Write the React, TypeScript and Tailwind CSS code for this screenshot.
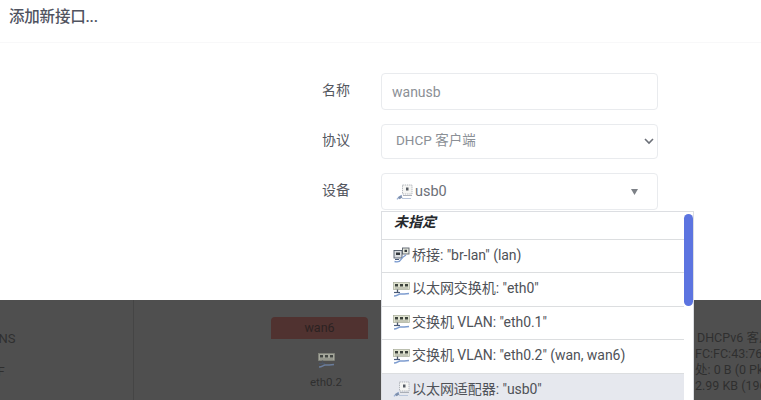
import React from "react";

function Eth({ dim = false }: { dim?: boolean }) {
  return (
    <svg viewBox="0 0 17 16" width="17" height="16" className={dim ? "opacity-60" : ""}>
      <rect x="0.5" y="1.5" width="16" height="7" fill="#dfe2cf" stroke="#a6aa98" strokeWidth="0.7" />
      <path d="M2 3h3v2.500H2zM7 3h3v2.500H7zM12 3h3v2.500h-3z" fill="#3c423c" />
      <path d="M2 7h13" stroke="#8f9486" strokeWidth="0.7" />
      <path d="M4.500 8.500v3" stroke="#4c5666" strokeWidth="1.300" />
      <path d="M1 11.500h6" stroke="#4a5a78" strokeWidth="1.200" />
      <path d="M1 15c3 0 4-1.600 6-2s4 .3 9-.4" fill="none" stroke="#7d9ccf" strokeWidth="1.500" />
    </svg>
  );
}

function Bridge() {
  return (
    <svg viewBox="0 0 17 16" width="17" height="16">
      <rect x="1" y="3.500" width="8" height="7.500" fill="#dcdfe2" stroke="#4f5a68" strokeWidth="0.900" />
      <rect x="9.500" y="1" width="6.500" height="6" fill="#e6e8de" stroke="#59606b" strokeWidth="0.900" />
      <path d="M3 5.500h4v2.500H3zM11.500 2.800h2.500v2.200h-2.500z" fill="#33383c" />
      <path d="M1.500 14.500c3.500 1 5.500 0 6.500-2s2.500-3 5-4.500" fill="none" stroke="#7d9ccf" strokeWidth="1.400" />
      <path d="M2 12.500h4" stroke="#4a5a78" strokeWidth="1" />
    </svg>
  );
}

function Usb() {
  return (
    <svg viewBox="0 0 17 16" width="17" height="16">
      <rect x="6.500" y="1" width="9.500" height="9" fill="#f6f6f4" stroke="#a2a7ae" strokeWidth="0.800" strokeDasharray="1.400 0.800" />
      <path d="M10 3.500h2.500v3H10z" fill="#555a62" />
      <path d="M7 11.500h9" stroke="#9aa0a8" strokeWidth="0.800" />
      <path d="M1 15.300c2-3 3-3.300 5-3.800" fill="none" stroke="#9db3d6" strokeWidth="1.300" />
      <path d="M2 13.300l3-1.800 1.500 2-3 1.800z" fill="#7e8fab" />
      <path d="M6 14.500h9" stroke="#b9c6dc" strokeWidth="1" />
    </svg>
  );
}

function Row({ icon, children, selected }: { icon: React.ReactNode; children: React.ReactNode; selected?: boolean }) {
  return (
    <div className={`flex h-[33.5px] items-center gap-[2px] border-b border-[#dcdee0] pb-[1px] pl-[11px] text-[14px] tracking-[-0.05px] text-[#4f5258] ${selected ? "bg-[#e6e8ee]" : "bg-white"}`}>
      {icon}
      <span className="whitespace-nowrap">{children}</span>
    </div>
  );
}

export default function App() {
  return (
    <div className="relative h-[400px] w-[761px] overflow-hidden bg-white font-['Roboto','Noto_Sans_CJK_SC',sans-serif]">
      <div className="h-[300px] bg-white">
        <div className="flex h-[43px] items-start border-b border-[#f8f8f9] pl-[9px] pt-[6px] text-[15.5px] leading-[22px] font-medium tracking-[-0.2px] text-[#50535f]">
          添加新接口...
        </div>
        <div className="ml-[322px] mt-[30px] flex w-[336px] flex-col">
          <div className="flex h-[37px] items-center">
            <span className="w-[59px] pb-[3px] text-[14px] text-[#55585f]">名称</span>
            <div className="flex h-[37px] flex-1 items-center rounded-[4px] border border-[#e9ebee] pl-[10px] pt-[2px] text-[14px] text-[#8b9096]">wanusb</div>
          </div>
          <div className="mt-[14px] flex h-[35px] items-center">
            <span className="w-[59px] pb-[2px] text-[14px] text-[#55585f]">协议</span>
            <div className="flex h-[35px] flex-1 items-center justify-between rounded-[4px] border border-[#e9ebee] pb-[2px] pl-[14px] pr-[2px] text-[13.5px] text-[#8b9096]">
              <span>DHCP 客户端</span>
              <svg width="12" height="12" viewBox="0 0 12 12"><path d="M2 4l4 4 4-4" fill="none" stroke="#6c7078" strokeWidth="1.600" /></svg>
            </div>
          </div>
          <div className="mt-[14px] flex h-[37px] items-center">
            <span className="w-[59px] pb-[3px] text-[14px] text-[#55585f]">设备</span>
            <div className="flex h-[37px] flex-1 items-center justify-between rounded-[4px] border border-[#e9ebee] pl-[14px] pr-[19px] text-[14.5px] text-[#6d7178]">
              <span className="flex items-center gap-[2px]"><Usb />usb0</span>
              <svg width="7" height="6" viewBox="0 0 7 6"><path d="M0 0h7L3.500 6z" fill="#7d8187" /></svg>
            </div>
          </div>
        </div>
      </div>

      <div className="flex h-[100px] bg-[#4f4f4f] text-[12px] text-[#2f2f2f]">
        <div className="w-[134px] shrink-0 overflow-hidden border-r border-[#454545] text-[13px]">
          <div className="-ml-[10px] mt-[29px] whitespace-nowrap">DNS</div>
          <div className="-ml-[6px] mt-[13px] whitespace-nowrap">IF</div>
        </div>
        <div className="w-[247px] shrink-0 pl-[137px] pt-[17px]">
          <div className="flex h-[22px] w-[97px] items-center justify-center rounded-t-[4px] bg-[#503230] text-[12.5px] text-[#2c2222]">wan6</div>
          <div className="mt-[13px] flex flex-col items-center">
            <Eth dim />
            <div className="mt-[6px] text-[11.5px] text-[#2f2f2f]">eth0.2</div>
          </div>
        </div>
        <div className="ml-[314px] w-[66px] shrink-0 overflow-hidden whitespace-nowrap pt-[30px] text-[12.5px] leading-[16px]">
          <div className="ml-[2px]">DHCPv6 客户端</div>
          <div>FC:FC:43:76:32</div>
          <div>处: 0 B (0 Pkts.)</div>
          <div>2.99 KB (196 Pkts.)</div>
        </div>
      </div>

      <div className="absolute left-[381px] top-[211px] flex h-[189px] w-[313px] border-l border-t border-r border-[#dcdee2] bg-white">
        <div className="w-[302px] shrink-0">
          <div className="flex h-[27.5px] items-center border-b border-[#dcdee0] pb-[6px] pl-[12px] text-[14px] font-bold italic text-[#26282c]">未指定</div>
          <Row icon={<Bridge />}>桥接: "br-lan" (lan)</Row>
          <Row icon={<Eth />}>以太网交换机: "eth0"</Row>
          <Row icon={<Eth />}>交换机 VLAN: "eth0.1"</Row>
          <Row icon={<Eth />}>交换机 VLAN: "eth0.2" (wan, wan6)</Row>
          <Row icon={<Usb />} selected>以太网适配器: "usb0"</Row>
        </div>
        <div className="mt-[2px] h-[92px] w-[9px] rounded-full bg-[#5c74e0]" />
      </div>
    </div>
  );
}
